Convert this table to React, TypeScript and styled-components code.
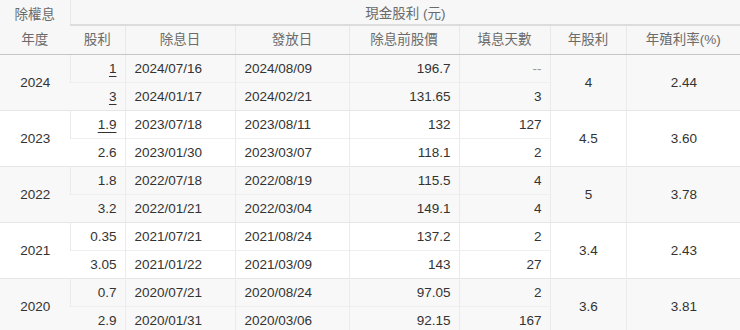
import React from "react";
import styled, { createGlobalStyle } from "styled-components";

type Payout = {
  cash: string;
  linked?: boolean;
  exDate: string;
  payDate: string;
  price: string;
  days: string;
};

type YearGroup = {
  year: string;
  total: string;
  yieldRate: string;
  rows: Payout[];
};

const data: YearGroup[] = [
  {
    year: "2024", total: "4", yieldRate: "2.44",
    rows: [
      { cash: "1", linked: true, exDate: "2024/07/16", payDate: "2024/08/09", price: "196.7", days: "--" },
      { cash: "3", linked: true, exDate: "2024/01/17", payDate: "2024/02/21", price: "131.65", days: "3" },
    ],
  },
  {
    year: "2023", total: "4.5", yieldRate: "3.60",
    rows: [
      { cash: "1.9", linked: true, exDate: "2023/07/18", payDate: "2023/08/11", price: "132", days: "127" },
      { cash: "2.6", exDate: "2023/01/30", payDate: "2023/03/07", price: "118.1", days: "2" },
    ],
  },
  {
    year: "2022", total: "5", yieldRate: "3.78",
    rows: [
      { cash: "1.8", exDate: "2022/07/18", payDate: "2022/08/19", price: "115.5", days: "4" },
      { cash: "3.2", exDate: "2022/01/21", payDate: "2022/03/04", price: "149.1", days: "4" },
    ],
  },
  {
    year: "2021", total: "3.4", yieldRate: "2.43",
    rows: [
      { cash: "0.35", exDate: "2021/07/21", payDate: "2021/08/24", price: "137.2", days: "2" },
      { cash: "3.05", exDate: "2021/01/22", payDate: "2021/03/09", price: "143", days: "27" },
    ],
  },
  {
    year: "2020", total: "3.6", yieldRate: "3.81",
    rows: [
      { cash: "0.7", exDate: "2020/07/21", payDate: "2020/08/24", price: "97.05", days: "2" },
      { cash: "2.9", exDate: "2020/01/31", payDate: "2020/03/06", price: "92.15", days: "167" },
    ],
  },
];

const App = () => {
  return (
    <>
      <GlobalStyle />
      <Table>
        <colgroup>
          <col style={{ width: 70 }} />
          <col style={{ width: 55 }} />
          <col style={{ width: 110 }} />
          <col style={{ width: 114 }} />
          <col style={{ width: 110 }} />
          <col style={{ width: 91 }} />
          <col style={{ width: 76 }} />
          <col style={{ width: 114 }} />
        </colgroup>
        <thead>
          <tr>
            <HeadCell rowSpan={2} $tall>除權息<br />年度</HeadCell>
            <GroupHead colSpan={7}>現金股利 (元)</GroupHead>
          </tr>
          <tr>
            <HeadCell>股利</HeadCell>
            <HeadCell>除息日</HeadCell>
            <HeadCell>發放日</HeadCell>
            <HeadCell>除息前股價</HeadCell>
            <HeadCell>填息天數</HeadCell>
            <HeadCell>年股利</HeadCell>
            <HeadCell>年殖利率(%)</HeadCell>
          </tr>
        </thead>
        {data.map((group, gi) => (
          <Group key={group.year} $shaded={gi % 2 === 0}>
            {group.rows.map((row, ri) => (
              <Row key={row.exDate} $first={ri === 0}>
                {ri === 0 && <Cell rowSpan={group.rows.length} $align="center">{group.year}</Cell>}
                <Cell $align="right">
                  {row.linked ? <Link>{row.cash}</Link> : row.cash}
                </Cell>
                <Cell $align="left">{row.exDate}</Cell>
                <Cell $align="left">{row.payDate}</Cell>
                <Cell $align="right">{row.price}</Cell>
                <Cell $align="right" $muted={row.days === "--"}>{row.days}</Cell>
                {ri === 0 && <Cell rowSpan={group.rows.length} $align="center">{group.total}</Cell>}
                {ri === 0 && <Cell rowSpan={group.rows.length} $align="center">{group.yieldRate}</Cell>}
              </Row>
            ))}
          </Group>
        ))}
      </Table>
    </>
  );
};

const GlobalStyle = createGlobalStyle`
  body {
    margin: 0;
    background: #ffffff;
    font-family: "Liberation Sans", "Noto Sans CJK TC", sans-serif;
  }
`;

const Table = styled.table`
  width: 740px;
  table-layout: fixed;
  border-collapse: collapse;
  font-size: 13.5px;
  color: #333333;
`;

const HeadCell = styled.th<{ $tall?: boolean }>`
  height: 28px;
  padding: 0 6px;
  background: #f7f7f7;
  color: #6b6b6b;
  font-weight: normal;
  text-align: center;
  line-height: ${(p) => (p.$tall ? "25px" : "20px")};
  border-left: 1px solid #e9e9e9;
  border-bottom: 1px solid #c6c6c6;

  &:first-child {
    border-left: none;
  }
`;

const GroupHead = styled.th`
  height: 24px;
  padding: 0;
  background: #f7f7f7;
  color: #6b6b6b;
  font-weight: normal;
  text-align: center;
  border-left: 1px solid #e9e9e9;
  border-bottom: 2px solid #dcdcdc;
`;

const Group = styled.tbody<{ $shaded: boolean }>`
  background: ${(p) => (p.$shaded ? "#f8f8f8" : "#ffffff")};
  border-bottom: 1px solid #e6e6e6;
`;

const Row = styled.tr<{ $first: boolean }>`
  height: 28px;

  td {
    border-top: ${(p) => (p.$first ? "none" : "1px solid #efefef")};
  }
`;

const Cell = styled.td<{ $align: "left" | "right" | "center"; $muted?: boolean }>`
  padding: 0 8px 0 9px;
  text-align: ${(p) => p.$align};
  color: ${(p) => (p.$muted ? "#999999" : "#333333")};
  white-space: nowrap;
  border-left: 1px solid #ebebeb;

  &:first-child {
    border-left: none;
  }

  &[rowspan] {
    border-top: none;
  }
`;

const Link = styled.span`
  text-decoration: underline;
  text-underline-offset: 3px;
  cursor: pointer;
`;

export default App;
